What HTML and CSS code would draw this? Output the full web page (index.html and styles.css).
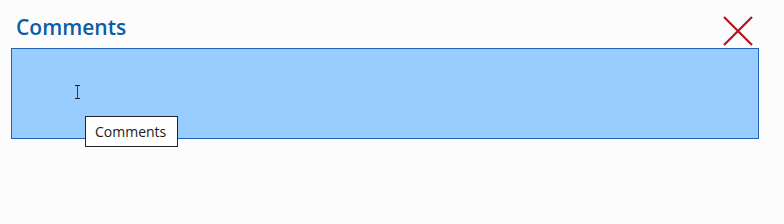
FILE: index.html
```html
<!DOCTYPE html>
<html lang="en">
<head>
    <meta charset="UTF-8">
    <title>Comments</title>
    <link rel="stylesheet" href="styles.css">
</head>
<body>
    <div class="panel">
        <div class="panel-head">
            <h1>Comments</h1>
            <button class="close" aria-label="Close">
                <svg width="30" height="30" viewBox="0 0 30 30">
                    <path d="M1 1 L29 29 M29 1 L1 29" stroke="#b3121c" stroke-width="2.2" fill="none"/>
                </svg>
            </button>
        </div>
        <div class="comment-box">
            <span class="cursor"></span>
            <div class="tooltip">Comments</div>
        </div>
    </div>
</body>
</html>
```

FILE: styles.css
```css
body {
    margin: 0;
    background-color: #fcfcfd;
    font-family: "Open Sans", "Noto Sans", sans-serif;
    width: 784px;
    height: 224px;
    overflow: hidden;
}
.panel {
    padding: 15px 25px 0 11px;
}
.panel-head {
    display: flex;
    justify-content: space-between;
    align-items: flex-end;
    height: 33px;
}
.panel-head h1 {
    margin: 0 0 0 5px;
    font-size: 21px;
    font-weight: 600;
    color: #0b5ca8;
    line-height: 24px;
    align-self: flex-start;
}
.close {
    border: none;
    background: none;
    padding: 0;
    margin: 0 6px 2px 0;
    width: 30px;
    height: 30px;
    cursor: pointer;
}
.close svg {
    display: block;
}
.comment-box {
    position: relative;
    height: 89px;
    background-color: #99ccff;
    border: 1px solid #1e66b4;
}
.cursor {
    position: absolute;
    left: 63px;
    top: 36px;
    width: 5px;
    height: 14px;
    border-top: 1px solid #222;
    border-bottom: 1px solid #222;
    box-sizing: border-box;
}
.cursor::before {
    content: "";
    position: absolute;
    left: 2px;
    top: 0;
    width: 1px;
    height: 12px;
    background: #8a1a10;
}
.tooltip {
    position: absolute;
    left: 73px;
    top: 67px;
    width: 93px;
    height: 31px;
    box-sizing: border-box;
    background: #ffffff;
    border: 1px solid #222;
    font-size: 14px;
    color: #1a1a1a;
    line-height: 29px;
    padding-left: 9px;
}
```
